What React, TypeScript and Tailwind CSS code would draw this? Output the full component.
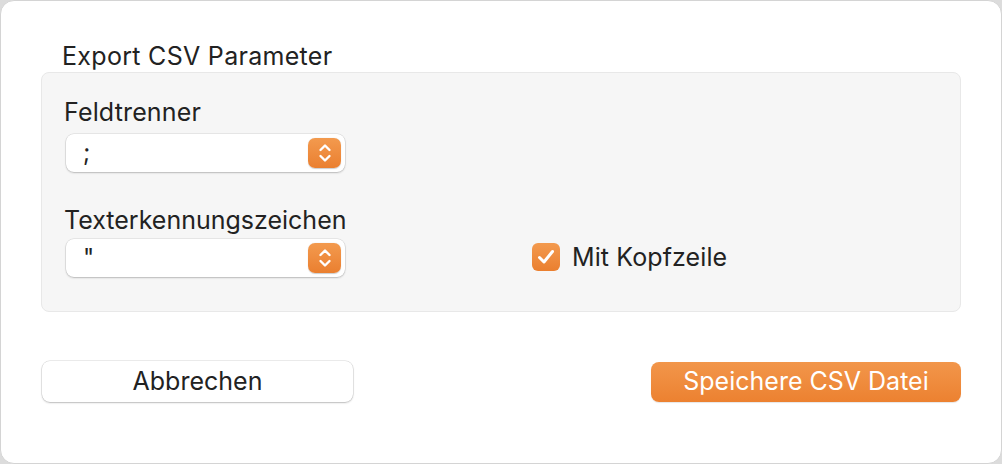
import React from "react";

function Stepper() {
  return (
    <div className="w-[33px] h-[30px] rounded-[7px] bg-gradient-to-b from-[#f39a4e] to-[#ea7f2f] flex items-center justify-center shadow-[0_0.5px_1px_rgba(0,0,0,0.2)]">
      <svg width="14" height="22" viewBox="0 0 14 22" fill="none" stroke="white" strokeWidth="2.4" strokeLinecap="round" strokeLinejoin="round">
        <path d="M2.5 8 L7 3.5 L11.5 8" />
        <path d="M2.5 14 L7 18.5 L11.5 14" />
      </svg>
    </div>
  );
}

function Select({ value }: { value: string }) {
  return (
    <div className="w-[279px] h-[38px] bg-white rounded-[8px] shadow-[0_0_0_0.5px_rgba(0,0,0,0.12),0_1px_2px_rgba(0,0,0,0.2)] flex items-center justify-between pl-[17px] pr-[4px]">
      <span className="text-[24px] leading-[30px] text-[#222]">{value}</span>
      <Stepper />
    </div>
  );
}

export default function App() {
  return (
    <div className="w-[1002px] h-[464px] bg-[#dcdcdc] font-['Inter','Noto_Sans',sans-serif]">
      <div className="w-full h-full bg-white rounded-[14px] border border-[#d4d4d4] flex flex-col pl-[40px] pr-[40px] pt-[40px]">
        <div className="pl-[21px] text-[25px] leading-[30px] tracking-[0.3px] text-[#222]">Export CSV Parameter</div>
        <div className="mt-[1px] h-[240px] bg-[#f6f6f6] border border-[#e8e8e8] rounded-[8px] flex flex-col pl-[24px] pt-[24px]">
          <div className="-ml-[2px] text-[25px] leading-[30px] tracking-[0.15px] text-[#222]">Feldtrenner</div>
          <div className="mt-[7px]"><Select value=";" /></div>
          <div className="-ml-[2px] mt-[33px] text-[25px] leading-[30px] text-[#222]">Texterkennungszeichen</div>
          <div className="mt-[4px] flex items-center">
            <Select value={'"'} />
            <div className="ml-[187px] flex items-center gap-[12px] -mt-[2px]">
              <div className="w-[28px] h-[28px] rounded-[6px] bg-gradient-to-b from-[#f39a4e] to-[#ea7f2f] flex items-center justify-center">
                <svg width="20" height="18" viewBox="0 0 20 18" fill="none" stroke="white" strokeWidth="3" strokeLinecap="round" strokeLinejoin="round">
                  <path d="M3.5 9.5 L8 14 L16.5 3.5" />
                </svg>
              </div>
              <span className="text-[25px] leading-[30px] tracking-[0.1px] text-[#222]">Mit Kopfzeile</span>
            </div>
          </div>
        </div>
        <div className="mt-[49px] flex justify-between pl-[1px]">
          <button className="w-[311px] h-[41px] bg-white rounded-[8px] shadow-[0_0_0_0.5px_rgba(0,0,0,0.15),0_1px_2px_rgba(0,0,0,0.2)] text-[25px] text-[#222]">Abbrechen</button>
          <button className="w-[310px] h-[40px] rounded-[8px] bg-gradient-to-b from-[#f2964a] to-[#ec8130] text-white text-[25px] mt-[1px] shadow-[0_1px_1px_rgba(0,0,0,0.1)]">Speichere CSV Datei</button>
        </div>
      </div>
    </div>
  );
}
